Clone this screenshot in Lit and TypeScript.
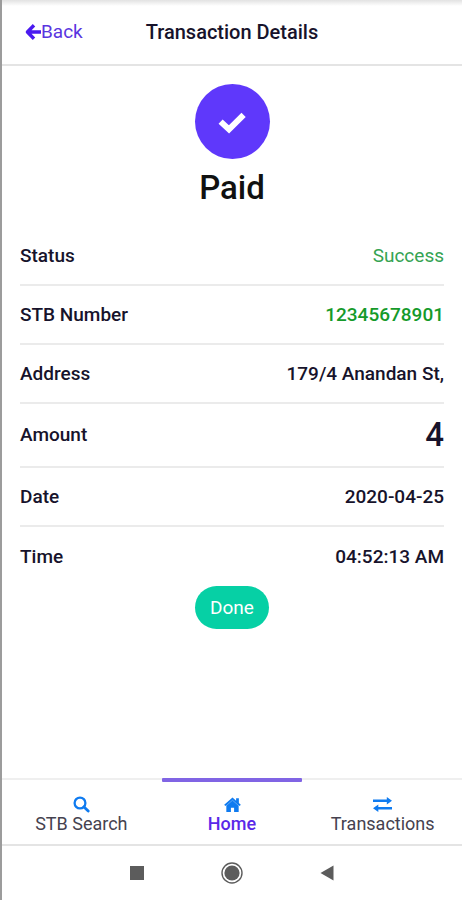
import { LitElement, html, svg, css } from "lit";
import { customElement } from "lit/decorators.js";
import { classMap } from "lit/directives/class-map.js";

interface Detail {
  label: string;
  value: string;
  kind?: "success" | "number" | "amount";
}

const details: Detail[] = [
  { label: "Status", value: "Success", kind: "success" },
  { label: "STB Number", value: "12345678901", kind: "number" },
  { label: "Address", value: "179/4 Anandan St," },
  { label: "Amount", value: "4", kind: "amount" },
  { label: "Date", value: "2020-04-25" },
  { label: "Time", value: "04:52:13 AM" },
];

const searchIcon = svg`<circle cx="7" cy="7" r="5.4" fill="none" stroke="currentColor" stroke-width="2.3"/><path d="M11 11L15.2 15" stroke="currentColor" stroke-width="2.8" stroke-linecap="round"/>`;
const homeIcon = svg`<path d="M8 1.4L11.4 4.4V2H14V6.7L15.8 8.2L14.8 9.4L13.8 8.6V15H9.5V11H6.5V15H2.2V8.6L1.2 9.4L.2 8.2Z" fill="currentColor"/><path d="M2 9.2L8 4L14 9.2" fill="none" stroke="#fff" stroke-opacity=".5" stroke-width=".6"/>`;
const swapIcon = svg`<path d="M0 3.4H13V1L18 4.5L13 8V5.6H0Z M18 10.4H5V8L0 11.5L5 15V12.6H18Z" fill="currentColor"/>`;

const tabs = [
  { label: "STB Search", icon: searchIcon, box: "0 0 17 17", active: false },
  { label: "Home", icon: homeIcon, box: "0 0 16 16", active: true },
  { label: "Transactions", icon: swapIcon, box: "0 0 18 16", active: false },
];

@customElement("app-root")
export class AppRoot extends LitElement {
  static styles = css`
    :host {
      display: flex;
      flex-direction: column;
      box-sizing: border-box;
      min-height: 100vh;
      background: #fff;
      border-left: 2px solid #9c9c9c;
      font-family: Roboto, "Liberation Sans", sans-serif;
      font-size: 19px;
      line-height: 24px;
      color: #17132b;
    }
    button {
      font: inherit;
      border: 0;
      padding: 0;
      background: none;
    }
    a {
      color: inherit;
      text-decoration: none;
    }
    .header {
      display: grid;
      grid-template-columns: 1fr auto 1fr;
      align-items: center;
      box-sizing: border-box;
      height: 66px;
      padding: 0 23px;
      border-bottom: 2px solid #e4e4e4;
      background: linear-gradient(#e2e2e2, #fff 6px);
    }
    .back {
      display: flex;
      align-items: center;
      color: #5a35e0;
    }
    .arrow {
      width: 16px;
      height: 18px;
      color: #4a1af0;
    }
    .title {
      margin: 0;
      font-size: 20px;
      font-weight: 500;
    }
    .main {
      flex: 1;
      display: flex;
      flex-direction: column;
      align-items: center;
      padding: 18px 18px 0;
    }
    .badge {
      display: flex;
      align-items: center;
      justify-content: center;
      width: 75px;
      height: 75px;
      border-radius: 50%;
      background: #5f38fb;
      color: #fff;
    }
    .check {
      width: 30px;
      height: 24px;
    }
    .paid {
      margin: 9px 0 19px;
      font-size: 33px;
      line-height: 40px;
      font-weight: 500;
      color: #111;
    }
    .details {
      align-self: stretch;
      margin: 0;
    }
    .row {
      display: flex;
      align-items: center;
      justify-content: space-between;
      box-sizing: border-box;
      height: 59px;
      border-bottom: 2px solid #ebebeb;
      font-weight: 500;
    }
    .row:last-child {
      border-bottom: 0;
    }
    .row.amount {
      height: 64px;
    }
    .value {
      margin: 0;
    }
    .success .value {
      font-weight: 400;
      color: #35a352;
    }
    .number .value {
      color: #159a2a;
    }
    .amount .value {
      font-size: 33px;
    }
    .done {
      height: 43px;
      padding: 0 15px;
      border-radius: 22px;
      background: #06d0a5;
      color: #fff;
    }
    .tabs {
      display: flex;
      box-sizing: border-box;
      height: 68px;
      padding: 0 4px;
      border-top: 2px solid #efefef;
      border-bottom: 2px solid #e4e4e4;
    }
    .tab {
      position: relative;
      flex: 1;
      display: flex;
      flex-direction: column;
      align-items: center;
      padding-top: 16px;
      font-size: 18px;
      line-height: 22px;
      color: #45424f;
    }
    .tab.active {
      color: #5a28e8;
      font-weight: 500;
    }
    .tab.active::before {
      content: "";
      position: absolute;
      top: -2px;
      left: 5px;
      right: 5px;
      height: 4px;
      border-radius: 1px;
      background: #8064e4;
    }
    .icon {
      height: 17px;
      color: #0f7bf0;
    }
    .system {
      display: flex;
      align-items: center;
      justify-content: center;
      gap: 64px;
      height: 54px;
    }
    .key {
      display: flex;
      justify-content: center;
      width: 31px;
      color: #5c5c5c;
    }
    .glyph {
      width: 24px;
      height: 24px;
    }
  `;

  render() {
    return html`
      <header class="header">
        <a class="back" href="#back">
          <svg class="arrow" viewBox="0 0 16 18" aria-hidden="true">
            <path d="M9 2.2L2.4 9L9 15.8M2.6 9H16" fill="none" stroke="currentColor" stroke-width="3.4" stroke-linejoin="round" />
          </svg>Back</a>
        <h1 class="title">Transaction Details</h1>
      </header>
      <main class="main">
        <div class="badge">
          <svg class="check" viewBox="0 0 30 24" aria-hidden="true">
            <path d="M3.6 11.6L12 19.4L26.6 4.8" fill="none" stroke="currentColor" stroke-width="6" />
          </svg>
        </div>
        <h2 class="paid">Paid</h2>
        <dl class="details">
          ${details.map(
            (d) => html`<div class=${classMap({ row: true, [d.kind ?? "plain"]: true })}>
              <dt>${d.label}</dt>
              <dd class="value">${d.value}</dd>
            </div>`
          )}
        </dl>
        <button class="done" type="button">Done</button>
      </main>
      <nav class="tabs">
        ${tabs.map(
          (t) => html`<a class=${classMap({ tab: true, active: t.active })} href="#">
            <svg class="icon" viewBox=${t.box} aria-hidden="true">${t.icon}</svg>
            <span>${t.label}</span>
          </a>`
        )}
      </nav>
      <div class="system">
        <button class="key" type="button" aria-label="Recent apps">
          <svg class="glyph" viewBox="0 0 24 24"><rect x="5" y="5" width="14" height="14" fill="currentColor" /></svg>
        </button>
        <button class="key" type="button" aria-label="Home screen">
          <svg class="glyph" viewBox="0 0 24 24">
            <circle cx="12" cy="12" r="10" fill="none" stroke="currentColor" stroke-width="1.4" />
            <circle cx="12" cy="12" r="7.6" fill="currentColor" />
          </svg>
        </button>
        <button class="key" type="button" aria-label="Go back">
          <svg class="glyph" viewBox="0 0 24 24"><path d="M18.5 4.5V19.5L5.5 12Z" fill="currentColor" /></svg>
        </button>
      </div>
    `;
  }
}
